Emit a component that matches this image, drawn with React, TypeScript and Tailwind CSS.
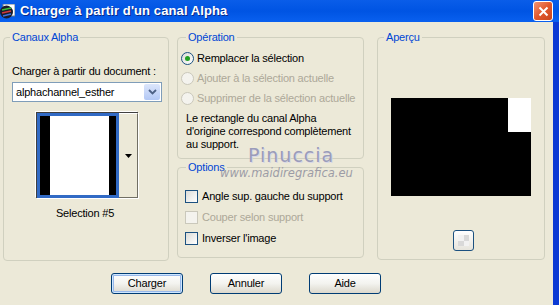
import React from 'react';

const font = { fontFamily: '"Liberation Sans", Arial, sans-serif' };

const Radio = ({ checked, disabled, label }: { checked?: boolean; disabled?: boolean; label: string }) => (
  <div className="flex items-center h-[20px]">
    <span
      className={`relative w-[13px] h-[13px] rounded-full border flex items-center justify-center ${
        disabled ? 'border-[#cac8bb] bg-[#f4f3ee]' : 'border-[#1c5180] bg-gradient-to-br from-[#dcdcd7] to-white'
      }`}
    >
      {checked && <span className="w-[5px] h-[5px] rounded-full bg-[#21a121]" />}
    </span>
    <span className={`ml-[3px] text-[11px] leading-[13px] ${disabled ? 'text-[#aca899]' : 'text-black'}`}>{label}</span>
  </div>
);

const Check = ({ disabled, label }: { disabled?: boolean; label: string }) => (
  <div className="flex items-center h-[21px]">
    <span
      className={`w-[13px] h-[13px] border ${
        disabled ? 'border-[#cac8bb] bg-[#f4f3ee]' : 'border-[#1c5180] bg-gradient-to-br from-[#dcdcd7] to-white'
      }`}
    />
    <span className={`ml-[4px] text-[11px] leading-[13px] ${disabled ? 'text-[#aca899]' : 'text-black'}`}>{label}</span>
  </div>
);

const XpButton = ({ label, isDefault }: { label: string; isDefault?: boolean }) => (
  <button
    className={`w-[72px] h-[21px] rounded-[3px] border border-[#003c74] bg-gradient-to-b from-white via-[#f3f3ef] to-[#dcd8cc] text-[11px] text-black ${
      isDefault ? 'shadow-[inset_0_0_0_1px_#cee7ff,inset_0_0_0_2px_#98b8ea]' : ''
    }`}
  >
    {label}
  </button>
);

const App = () => {
  return (
    <div className="w-[559px] h-[305px] flex flex-col overflow-hidden select-none" style={font}>
      {/* Title bar */}
      <div className="h-[22px] flex items-center bg-gradient-to-b from-[#0a5de9] via-[#0054e3] to-[#0a60ef]">
        <svg width="15" height="15" viewBox="0 0 15 15" className="ml-0 mr-[5px]">
          <rect x="3" y="0" width="12" height="12" fill="#ffffff" stroke="#6b7b8c" />
          <circle cx="6.5" cy="8" r="6.5" fill="#1b1b2a" />
          <path d="M2 6 L11 4" stroke="#3bbf3b" strokeWidth="1.6" />
          <path d="M2 9 L11 7" stroke="#d33a3a" strokeWidth="1.6" />
          <path d="M3 12 L11 10" stroke="#3a74e0" strokeWidth="1.6" />
        </svg>
        <span className="text-white font-bold text-[13px] tracking-[0.1px] [text-shadow:1px_1px_0_#0a2a8a]">
          Charger à partir d'un canal Alpha
        </span>
        <div className="flex-1" />
        <div className="w-[20px] h-[20px] mr-[6px] rounded-[3px] border border-white bg-gradient-to-br from-[#ef9270] via-[#e2582d] to-[#c9471f] flex items-center justify-center">
          <svg width="11" height="11" viewBox="0 0 11 11">
            <path d="M1.5 1.5 L9.5 9.5 M9.5 1.5 L1.5 9.5" stroke="white" strokeWidth="2" />
          </svg>
        </div>
      </div>

      <div className="flex-1 flex">
        <div className="flex-1 bg-[#ece9d8] flex flex-col relative tracking-[-0.2px]">
          <div className="flex items-start pt-[9px]">
            {/* Canaux Alpha */}
            <fieldset className="ml-[3px] w-[166px] h-[230px] border border-[#d0d0bf] rounded-[4px]">
              <legend className="ml-[6px] px-[2px] text-[11px] leading-[13px] text-[#0046d5]">Canaux Alpha</legend>
              <div className="pl-[8px] mt-[21px] text-[11px] leading-[13px] text-black">Charger à partir du document :</div>
              <div className="ml-[8px] mt-[4px] w-[150px] h-[20px] border border-[#7f9db9] bg-white flex items-center">
                <span className="pl-[3px] text-[11px] text-black flex-1">alphachannel_esther</span>
                <span className="w-[16px] h-[16px] mr-[1px] rounded-[2px] bg-gradient-to-b from-[#dce6fb] to-[#b3c8f5] flex items-center justify-center">
                  <svg width="9" height="6" viewBox="0 0 9 6">
                    <path d="M1 1 L4.5 4.5 L8 1" stroke="#4d6185" strokeWidth="1.8" fill="none" />
                  </svg>
                </span>
              </div>
              <div className="ml-[32px] mt-[10px] w-[102px] h-[86px] flex border-t border-l border-[#404040] shadow-[-1px_-1px_0_#ffffff,1px_1px_0_#ffffff]">
                <div className="w-[82px] h-full border-[3px] border-[#316ac5] flex">
                  <div className="w-[10px] bg-black" />
                  <div className="flex-1 bg-white" />
                  <div className="w-[7px] bg-black" />
                </div>
                <div className="flex-1 border-t border-white border-r border-b border-r-[#716f64] border-b-[#716f64] flex items-center justify-center">
                  <svg width="7" height="4" viewBox="0 0 7 4">
                    <path d="M0 0 L7 0 L3.5 4 Z" fill="black" />
                  </svg>
                </div>
              </div>
              <div className="mt-[9px] text-center pr-[2px] text-[11px] leading-[13px] text-black">Selection #5</div>
            </fieldset>

            {/* Middle column */}
            <div className="ml-[8px] w-[187px] flex flex-col">
              <fieldset className="h-[128px] border border-[#d0d0bf] rounded-[4px] pl-[3px]">
                <legend className="ml-[5px] px-[2px] text-[11px] leading-[13px] text-[#0046d5]">Opération</legend>
                <div className="mt-[4px]">
                  <Radio checked label="Remplacer la sélection" />
                  <Radio disabled label="Ajouter à la sélection actuelle" />
                  <Radio disabled label="Supprimer de la sélection actuelle" />
                </div>
                <p className="pl-[5px] mt-[4px] text-[11px] leading-[13px] text-black">
                  Le rectangle du canal Alpha
                  <br />
                  d'origine correspond complètement
                  <br />
                  au support.
                </p>
              </fieldset>
              <fieldset className="mt-[2px] h-[97px] border border-[#d0d0bf] rounded-[4px] pl-[7px]">
                <legend className="ml-[1px] px-[2px] text-[11px] leading-[13px] text-[#0046d5]">Options</legend>
                <div className="mt-[12px]">
                  <Check label="Angle sup. gauche du support" />
                  <Check disabled label="Couper selon support" />
                  <Check label="Inverser l'image" />
                </div>
              </fieldset>
            </div>

            {/* Aperçu */}
            <fieldset className="ml-[13px] w-[168px] h-[229px] border border-[#d0d0bf] rounded-[4px]">
              <legend className="ml-[6px] px-[2px] text-[11px] leading-[13px] text-[#0046d5]">Aperçu</legend>
              <div className="ml-[13px] mt-[54px] w-[140px] h-[98px] bg-black flex justify-end">
                <div className="w-[23px] h-[34px] bg-white" />
              </div>
              <div className="ml-[75px] mt-[34px] w-[21px] h-[21px] rounded-[3px] border border-[#1c5180] bg-gradient-to-b from-white to-[#e6e4dc] p-[4px]">
                <div className="w-full h-full grid grid-cols-2 grid-rows-2">
                  <div className="bg-[#f2f2f2]" />
                  <div className="bg-[#d9d9d9]" />
                  <div className="bg-[#d9d9d9]" />
                  <div className="bg-[#f2f2f2]" />
                </div>
              </div>
            </fieldset>
          </div>

          {/* Watermark */}
          <div className="absolute left-[248px] top-[123px] text-[19px] leading-[20px] tracking-[1px] text-[#9a9cba] [text-shadow:1px_1px_0_#d8d8e6]" style={{ fontFamily: '"DejaVu Sans", sans-serif' }}>
            Pinuccia
          </div>
          <div className="absolute left-[220px] top-[145px] text-[11.5px] leading-[12px] italic tracking-[0px] text-[#9c9ca6]" style={{ fontFamily: '"DejaVu Sans", sans-serif' }}>
            www.maidiregrafica.eu
          </div>

          {/* Buttons */}
          <div className="flex ml-[111px] mt-[12px] gap-[27px]">
            <XpButton label="Charger" isDefault />
            <XpButton label="Annuler" />
            <XpButton label="Aide" />
          </div>
        </div>
        <div className="w-[6px] bg-[#0b3ad4]" />
      </div>
    </div>
  );
};

export default App;
